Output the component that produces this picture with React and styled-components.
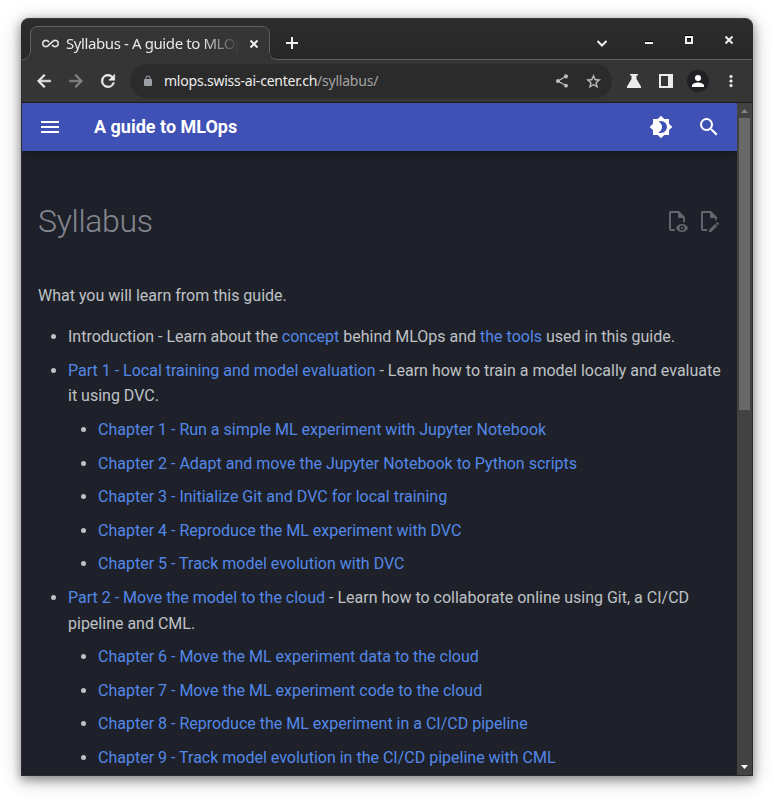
import React from "react";
import styled, { createGlobalStyle } from "styled-components";

const GlobalStyle = createGlobalStyle`
  * { box-sizing: border-box; }
  html, body { margin: 0; background: #fff; height: 100%; overflow: hidden; }
`;

const Desktop = styled.div`
  width: 774px;
  height: 800px;
  padding: 18px 21px 24px;
  overflow: hidden;
  background: #fff;
`;

const Window = styled.div`
  width: 732px;
  height: 758px;
  border: 1px solid #2b2b2b;
  border-top-color: #383838;
  border-radius: 8px 8px 0 0;
  overflow: hidden;
  display: flex;
  flex-direction: column;
  background: #353535;
  box-shadow: 0 3px 9px 1px rgba(0, 0, 0, 0.3), 0 4px 20px rgba(0, 0, 0, 0.28);
`;

const TabStrip = styled.div`
  height: 41px;
  flex: none;
  display: flex;
  align-items: stretch;
  padding-top: 7px;
  background: linear-gradient(#2d2d2d, #272727);
`;

const StripEdge = styled.div`
  flex: 1;
  border-bottom: 1px solid #616161;
  display: flex;
  align-items: center;
`;

const TabCurve = styled.svg`
  display: block;
  flex: none;
  width: 8px;
  height: 34px;
`;

const Tab = styled.div`
  width: 224px;
  flex: none;
  display: flex;
  align-items: center;
  background: #353535;
  border-top: 1px solid #616161;
  color: #e8e8e8;
`;

const TabTitle = styled.div`
  width: 172px;
  height: 24px;
  margin-top: -2px;
  margin-left: 7px;
  overflow: hidden;
  white-space: nowrap;
  font: 15px/24px "Noto Sans", sans-serif;
  letter-spacing: -0.4px;
  mask-image: linear-gradient(to right, #000 136px, transparent 173px);
`;

const Icon = styled.svg`
  display: block;
  flex: none;
  width: ${(p) => p.$size || 24}px;
  height: ${(p) => p.$size || 24}px;
  margin-left: ${(p) => p.$left || 0}px;
  margin-top: ${(p) => p.$top || 0}px;
  fill: ${(p) => p.$fill || "currentColor"};
  stroke: ${(p) => p.$fill || "currentColor"};
  stroke-width: ${(p) => p.$bold || 0};
`;

const Toolbar = styled.div`
  height: 43px;
  flex: none;
  display: flex;
  align-items: center;
  color: #ececec;
  background: #353535;
  border-bottom: 1px solid #1b1b1b;
`;

const AddressBar = styled.div`
  width: 482px;
  height: 34px;
  margin-left: 12px;
  border-radius: 17px;
  display: flex;
  align-items: center;
  background: #2b2b2b;
  color: #bdbdbd;
`;

const Url = styled.div`
  width: 380px;
  margin-left: 10px;
  font: 14px/24px "Noto Sans", sans-serif;
  letter-spacing: -0.22px;
  white-space: nowrap;
  color: #a3a3a3;
  span { color: #ededed; }
`;

const Avatar = styled.div`
  width: 22px;
  height: 22px;
  margin-left: 14px;
  border-radius: 50%;
  background: #202124;
  color: #fff;
`;

const Viewport = styled.div`
  flex: 1;
  min-height: 0;
  display: flex;
`;

const Page = styled.main`
  width: 715px;
  overflow: hidden;
  background: #1e2129;
  font-family: Roboto, sans-serif;
`;

const Header = styled.header`
  height: 48px;
  display: flex;
  align-items: center;
  padding: 0 16px;
  position: relative;
  color: #fff;
  background: #4051b5;
  box-shadow: 0 0 4px rgba(0, 0, 0, 0.1), 0 4px 8px rgba(0, 0, 0, 0.2);
`;

const SiteTitle = styled.div`
  flex: 1;
  margin-left: 32px;
  font-size: 18px;
  font-weight: 700;
  line-height: 48px;
`;

const Article = styled.article`
  padding: 50px 16px 0;
  color: #bfc1c6;
  font-size: 16px;
  line-height: 25.6px;
`;

const TitleRow = styled.div`
  display: flex;
  align-items: flex-start;
  height: 81.6px;
  color: #62656d;
`;

const Title = styled.h1`
  flex: 1;
  margin: 0;
  font-size: 32px;
  font-weight: 300;
  line-height: 41.6px;
  letter-spacing: -0.32px;
  color: #858790;
`;

const Intro = styled.p`
  margin: 0 0 16px;
`;

const List = styled.ul`
  margin: ${(p) => (p.$nested ? "8px 0" : "0")};
  padding: 0;
  list-style: disc;
`;

const Item = styled.li`
  margin: 0 0 8px 30px;
`;

const Link = styled.a`
  color: #5488e8;
`;

const ScrollTrack = styled.div`
  width: 15px;
  display: flex;
  flex-direction: column;
  align-items: center;
  background: #424242;
`;

const ScrollButton = styled.svg`
  display: block;
  width: 15px;
  height: 15px;
`;

const ScrollThumb = styled.div`
  width: 11px;
  height: 292px;
  margin-bottom: auto;
  background: #686868;
`;

const parts = [
  {
    title: "Part 1 - Local training and model evaluation",
    text: " - Learn how to train a model locally and evaluate it using DVC.",
    chapters: [
      "Chapter 1 - Run a simple ML experiment with Jupyter Notebook",
      "Chapter 2 - Adapt and move the Jupyter Notebook to Python scripts",
      "Chapter 3 - Initialize Git and DVC for local training",
      "Chapter 4 - Reproduce the ML experiment with DVC",
      "Chapter 5 - Track model evolution with DVC",
    ],
  },
  {
    title: "Part 2 - Move the model to the cloud",
    text: " - Learn how to collaborate online using Git, a CI/CD pipeline and CML.",
    chapters: [
      "Chapter 6 - Move the ML experiment data to the cloud",
      "Chapter 7 - Move the ML experiment code to the cloud",
      "Chapter 8 - Reproduce the ML experiment in a CI/CD pipeline",
      "Chapter 9 - Track model evolution in the CI/CD pipeline with CML",
    ],
  },
];

const Glyph = ({ d, ...rest }) => (
  <Icon viewBox="0 0 24 24" {...rest}>
    <path d={d} />
  </Icon>
);

const icons = {
  infinity:
    "M18.6 6.62c-1.44 0-2.8.56-3.77 1.53L12 10.66 10.48 12h.01L7.8 14.39c-.64.64-1.49.99-2.4.99-1.87 0-3.39-1.51-3.39-3.38S3.53 8.62 5.4 8.62c.91 0 1.76.35 2.44 1.03l1.13 1 1.51-1.34L9.22 8.2C8.2 7.18 6.84 6.62 5.4 6.62 2.42 6.62 0 9.04 0 12s2.42 5.38 5.4 5.38c1.44 0 2.8-.56 3.77-1.53l2.83-2.5.01.01L13.52 12h-.01l2.69-2.39c.64-.64 1.49-.99 2.4-.99 1.87 0 3.39 1.51 3.39 3.38s-1.52 3.38-3.39 3.38c-.9 0-1.76-.35-2.44-1.03l-1.14-1.01-1.51 1.34 1.27 1.12c1.02 1.01 2.37 1.57 3.82 1.57 2.98 0 5.4-2.41 5.4-5.38s-2.42-5.37-5.4-5.37z",
  back: "M20 11H7.83l5.59-5.59L12 4l-8 8 8 8 1.41-1.41L7.83 13H20z",
  forward: "M12 4l-1.41 1.41L16.17 11H4v2h12.17l-5.58 5.59L12 20l8-8z",
  reload:
    "M17.65 6.35A7.96 7.96 0 0 0 12 4a8 8 0 1 0 7.73 10h-2.08A6 6 0 1 1 12 6c1.66 0 3.14.69 4.22 1.78L13 11h7V4z",
  lock: "M18 8h-1V6A5 5 0 0 0 7 6v2H6a2 2 0 0 0-2 2v10c0 1.1.9 2 2 2h12a2 2 0 0 0 2-2V10a2 2 0 0 0-2-2zM8.9 6a3.1 3.1 0 0 1 6.2 0v2H8.9z",
  share:
    "M18 16.08c-.76 0-1.44.3-1.96.77L8.91 12.7c.05-.23.09-.46.09-.7s-.04-.47-.09-.7l7.05-4.11A2.99 2.99 0 1 0 15 5c0 .24.04.47.09.7L8.04 9.81a3 3 0 1 0 0 4.38l7.12 4.16c-.05.21-.08.43-.08.65a2.92 2.92 0 1 0 2.92-2.92z",
  star: "M22 9.24l-7.19-.62L12 2 9.19 8.63 2 9.24l5.46 4.73L5.82 21 12 17.27 18.18 21l-1.63-7.03zM12 15.4l-3.76 2.27 1-4.28-3.32-2.88 4.38-.38L12 6.1l1.71 4.04 4.38.38-3.32 2.88 1 4.28z",
  person:
    "M12 12a4 4 0 1 0 0-8 4 4 0 0 0 0 8zm0 2c-2.67 0-8 1.34-8 4v2h16v-2c0-2.66-5.33-4-8-4z",
  dots: "M12 8a2 2 0 1 0 0-4 2 2 0 0 0 0 4zm0 2a2 2 0 1 0 0 4 2 2 0 0 0 0-4zm0 6a2 2 0 1 0 0 4 2 2 0 0 0 0-4z",
  menu: "M3 6h18v2H3V6m0 5h18v2H3v-2m0 5h18v2H3v-2Z",
  brightness:
    "M12 18c-.89 0-1.74-.2-2.5-.55C11.56 16.5 13 14.42 13 12c0-2.42-1.44-4.5-3.5-5.45C10.26 6.2 11.11 6 12 6a6 6 0 0 1 6 6 6 6 0 0 1-6 6m8-9.31V4h-4.69L12 .69 8.69 4H4v4.69L.69 12 4 15.31V20h4.69L12 23.31 15.31 20H20v-4.69L23.31 12 20 8.69Z",
  search:
    "M9.5 3A6.5 6.5 0 0 1 16 9.5c0 1.61-.59 3.09-1.56 4.23l.27.27h.79l5 5-1.5 1.5-5-5v-.79l-.27-.27A6.52 6.52 0 0 1 9.5 16 6.5 6.5 0 0 1 3 9.5 6.5 6.5 0 0 1 9.5 3m0 2C7 5 5 7 5 9.5S7 14 9.5 14 14 12 14 9.5 12 5 9.5 5Z",
  fileEye:
    "M17 18c.56 0 1 .44 1 1s-.44 1-1 1-1-.44-1-1 .44-1 1-1m0-3c-2.73 0-5.06 1.66-6 4 .94 2.34 3.27 4 6 4s5.06-1.66 6-4c-.94-2.34-3.27-4-6-4m0 6.5a2.5 2.5 0 0 1-2.5-2.5 2.5 2.5 0 0 1 2.5-2.5 2.5 2.5 0 0 1 2.5 2.5 2.5 2.5 0 0 1-2.5 2.5M9.27 20H6V4h7v5h5v4.07c.7.08 1.36.25 2 .49V8l-6-6H6a2 2 0 0 0-2 2v16a2 2 0 0 0 2 2h4.5a8.15 8.15 0 0 1-1.23-2Z",
  fileEdit:
    "M10 20H6V4h7v5h5v3.1l2-2V8l-6-6H6c-1.1 0-2 .9-2 2v16c0 1.1.9 2 2 2h4v-2m10.2-7c.1 0 .3.1.4.2l1.3 1.3c.2.2.2.6 0 .8l-1 1-2.1-2.1 1-1c.1-.1.2-.2.4-.2m0 3.9L14.1 23H12v-2.1l6.1-6.1 2.1 2.1Z",
};

const Stroke = styled(Icon)`
  fill: none;
  stroke: #efefef;
  stroke-width: 2;
`;

function BrowserTabs() {
  return (
    <TabStrip>
      <TabCurve viewBox="0 0 8 34">
        <path d="M0 33.5C5 33.5 8 31 8 26V34H0Z" fill="#353535" />
        <path d="M0 33.5C4.500 33.5 7.500 31 8 27" fill="none" stroke="#616161" />
      </TabCurve>
      <TabCurve viewBox="0 0 8 34">
        <path d="M0.5 34V8.5Q0.5 0.5 8 0.5V34Z" fill="#353535" />
        <path d="M0.5 27V8.5Q0.5 0.5 8 0.5" fill="none" stroke="#616161" />
      </TabCurve>
      <Tab>
        <Glyph d={icons.infinity} $size={17} $left={4} $top={-1} $bold={0.4} />
        <TabTitle>Syllabus - A guide to MLOps</TabTitle>
        <Stroke viewBox="0 0 10 10" $size={10} $left={11}>
          <path d="M1.5 1.5l7 7m0-7l-7 7" />
        </Stroke>
      </Tab>
      <TabCurve viewBox="0 0 8 34">
        <path d="M0 34V0.5Q7.5 0.5 7.5 8.5V34Z" fill="#353535" />
        <path d="M0 0.5Q7.5 0.5 7.5 8.5V27" fill="none" stroke="#616161" />
      </TabCurve>
      <TabCurve viewBox="0 0 8 34">
        <path d="M0 26Q0 33.5 8 33.5V34H0Z" fill="#353535" />
        <path d="M-0.5 26C-0.5 31 2.5 33.5 8 33.5" fill="none" stroke="#616161" />
      </TabCurve>
      <StripEdge>
        <Stroke viewBox="0 0 12 12" $size={12} $left={8}>
          <path d="M6 0v12M0 6h12" />
        </Stroke>
        <Stroke viewBox="0 0 12 12" $size={12} $left={298}>
          <path d="M1.5 4l4.5 4.5L10.500 4" />
        </Stroke>
        <Icon viewBox="0 0 8 8" $size={8} $left={37} $top={-5}>
          <path d="M0 5h8v1H0z" fill="#000" />
          <path d="M0 6h8v2H0z" fill="#f1f1f1" />
        </Icon>
        <Icon viewBox="0 0 9 9" $size={9} $left={32} $top={-6}>
          <path d="M0 0h8v1H0zM2 3h4v1H2z" fill="#000" />
          <path fillRule="evenodd" d="M0 1h8v8H0zM2 3v4h4V3z" fill="#f1f1f1" />
        </Icon>
        <Stroke viewBox="0 0 8 8" $size={8} $left={31} $top={-5}>
          <path d="M0.500 0.500l7 7m0-7l-7 7" />
        </Stroke>
      </StripEdge>
    </TabStrip>
  );
}

function BrowserToolbar() {
  return (
    <Toolbar>
      <Glyph d={icons.back} $size={20} $left={12} $bold={0.7} />
      <Glyph d={icons.forward} $size={20} $left={12} $bold={0.6} $fill="#868686" />
      <Glyph d={icons.reload} $size={20} $left={12} $bold={0.8} />
      <AddressBar>
        <Glyph d={icons.lock} $size={12} $left={12} $fill="#9aa0a6" $top={-1} />
        <Url>
          <span>mlops.swiss-ai-center.ch</span>/syllabus/
        </Url>
        <Glyph d={icons.share} $size={16} $left={10} />
        <Glyph d={icons.star} $size={17} $left={15} $bold={0.4} />
      </AddressBar>
      <Icon viewBox="0 0 14 14" $size={14} $left={15}>
        <path d="M3 0h8v1.500H9.500V5l4.500 7.500V14H0v-1.500L4.500 5V1.500H3z" />
      </Icon>
      <Icon viewBox="0 0 14 14" $size={14} $left={18}>
        <path fillRule="evenodd" d="M0 0h14v14H0zM2 2v10h7V2z" />
      </Icon>
      <Avatar>
        <Glyph d={icons.person} $size={18} $left={2} $top={2} />
      </Avatar>
      <Glyph d={icons.dots} $size={18} $left={12.5} $bold={0.3} />
    </Toolbar>
  );
}

export default function App() {
  return (
    <Desktop>
      <GlobalStyle />
      <Window>
        <BrowserTabs />
        <BrowserToolbar />
        <Viewport>
          <Page>
            <Header>
              <Glyph d={icons.menu} />
              <SiteTitle>A guide to MLOps</SiteTitle>
              <Glyph d={icons.brightness} />
              <Glyph d={icons.search} $left={24} />
            </Header>
            <Article>
              <TitleRow>
                <Title>Syllabus</Title>
                <Glyph d={icons.fileEye} $top={8} />
                <Glyph d={icons.fileEdit} $left={8} $top={8} />
              </TitleRow>
              <Intro>What you will learn from this guide.</Intro>
              <List>
                <Item>
                  Introduction - Learn about the <Link>concept</Link> behind MLOps and{" "}
                  <Link>the tools</Link> used in this guide.
                </Item>
                {parts.map((part) => (
                  <Item key={part.title}>
                    <Link>{part.title}</Link>
                    {part.text}
                    <List $nested>
                      {part.chapters.map((chapter) => (
                        <Item key={chapter}>
                          <Link>{chapter}</Link>
                        </Item>
                      ))}
                    </List>
                  </Item>
                ))}
              </List>
            </Article>
          </Page>
          <ScrollTrack>
            <ScrollButton viewBox="0 0 15 15">
              <path d="M4 10L7.500 6L11 10Z" fill="#868686" />
            </ScrollButton>
            <ScrollThumb />
            <ScrollButton viewBox="0 0 15 15">
              <path d="M4 5H11L7.500 9Z" fill="#fff" />
            </ScrollButton>
          </ScrollTrack>
        </Viewport>
      </Window>
    </Desktop>
  );
}
